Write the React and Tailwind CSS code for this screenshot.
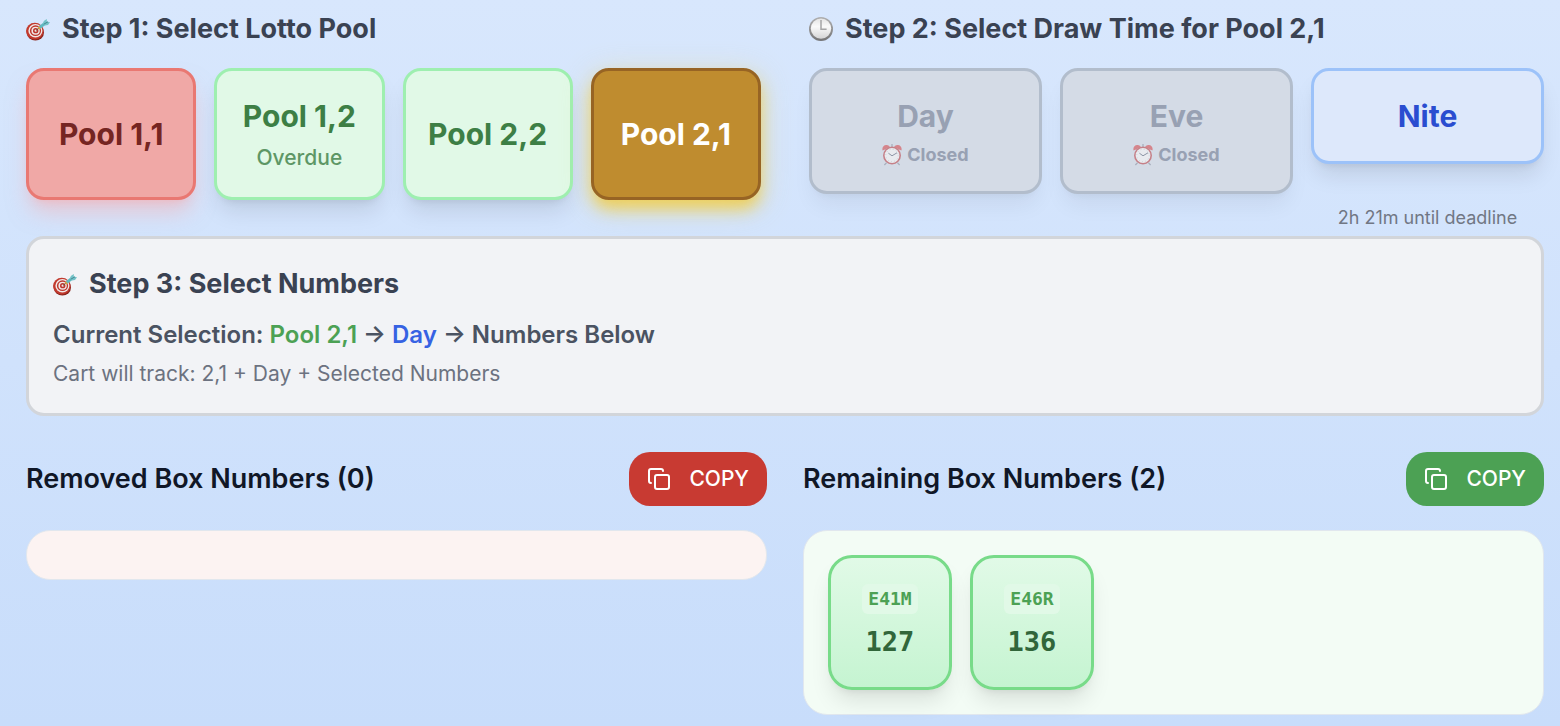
import React from 'react';
import { Copy } from 'lucide-react';

const POOLS = [
  {
    name: 'Pool 1,1',
    style: 'bg-[#f0a8a6] border-[#e97872] text-[#752522] shadow-[0_15px_22px_-4px_rgba(252,165,165,0.5),0_6px_9px_-6px_rgba(252,165,165,0.5)]',
  },
  {
    name: 'Pool 1,2',
    note: 'Overdue',
    style: 'bg-[#e1f9e7] border-[#9eefb0] text-[#3d7f45] shadow-[0_15px_22px_-4px_rgba(0,0,0,0.1),0_6px_9px_-6px_rgba(0,0,0,0.1)]',
  },
  {
    name: 'Pool 2,2',
    style: 'bg-[#e1f9e7] border-[#9eefb0] text-[#3d7f45] shadow-[0_15px_22px_-4px_rgba(0,0,0,0.1),0_6px_9px_-6px_rgba(0,0,0,0.1)]',
  },
  {
    name: 'Pool 2,1',
    style: 'bg-[#bf8c2f] border-[#976424] text-white shadow-[0_6px_30px_rgba(235,215,110,0.45),0_10px_16px_-2px_rgba(245,200,50,0.85)]',
  },
];

const DRAWS = [
  { name: 'Day', closed: true },
  { name: 'Eve', closed: true },
  { name: 'Nite', deadline: '2h 21m until deadline' },
];

const REMAINING = [
  { code: 'E41M', number: '127' },
  { code: 'E46R', number: '136' },
];

function TargetIcon() {
  return (
    <svg className="size-6 shrink-0" viewBox="0 0 24 24" aria-hidden="true">
      <ellipse cx="9.4" cy="15.4" rx="8.6" ry="8.2" fill="#8a241d" />
      <ellipse cx="8.8" cy="14.1" rx="8.8" ry="8.4" fill="#c23a2e" />
      <ellipse cx="9.4" cy="13.7" rx="7" ry="6.8" fill="#f1e9e8" />
      <ellipse cx="9.5" cy="13.7" rx="5.6" ry="5.4" fill="#bd362c" />
      <ellipse cx="9.6" cy="13.7" rx="4.2" ry="4" fill="#f1e9e8" />
      <ellipse cx="9.7" cy="13.7" rx="2.7" ry="2.6" fill="#bd362c" />
      <ellipse cx="9.7" cy="13.7" rx="1.2" ry="1.1" fill="#f1e9e8" />
      <path d="M10 13.4 13.6 10.6" stroke="#6b4a35" strokeWidth="1" />
      <path d="M12.4 11.6 15 9.6" stroke="#d9a93c" strokeWidth="2.2" />
      <path d="M13.8 10.4 19.4 6" stroke="#5fb9c0" strokeWidth="3" />
      <path d="M17 6.8 17.8 4 20.8 2 20.8 4.6 24 5.2 22 8 18.8 8.4Z" fill="#74c3c8" />
      <path d="M17.8 7.2 22 4.8" stroke="#3f7f8c" strokeWidth="0.9" />
    </svg>
  );
}

function ClockIcon() {
  return (
    <svg className="size-6 shrink-0" viewBox="0 0 24 24" aria-hidden="true">
      <defs>
        <linearGradient id="rim" x1="0" y1="0" x2="0" y2="1">
          <stop offset="0" stopColor="#b0b0b1" />
          <stop offset="1" stopColor="#747476" />
        </linearGradient>
        <linearGradient id="face" x1="0" y1="0" x2="0" y2="1">
          <stop offset="0" stopColor="#e4e4e4" />
          <stop offset="0.4" stopColor="#fafafa" />
          <stop offset="1" stopColor="#d4d4d5" />
        </linearGradient>
      </defs>
      <circle cx="12" cy="12" r="12" fill="url(#rim)" />
      <circle cx="12" cy="11.6" r="10.2" fill="url(#face)" />
      <path d="M12 3V12.2H17.6" fill="none" stroke="#a5a5a6" strokeWidth="1.5" />
    </svg>
  );
}

function AlarmIcon() {
  return (
    <svg className="h-[22px] w-5 shrink-0" viewBox="0 0 20 22" aria-hidden="true">
      <path d="M10 0V4M4.6 18.6 2.4 21M15.4 18.6 17.6 21" stroke="#a9b0be" strokeWidth="1.3" />
      <path d="M.6 6.6C-.4 3.4 2 .6 4.6 1 6.4 1.2 7.6 2 8 3.2Z" fill="#d5858c" />
      <path d="M19.4 6.6C20.4 3.4 18 .6 15.4 1 13.6 1.2 12.4 2 12 3.2Z" fill="#d5858c" />
      <circle cx="10" cy="11.5" r="9" fill="#c58088" />
      <circle cx="10" cy="11.5" r="7.4" fill="#e9ebef" />
      <circle cx="10" cy="11.5" r="6.2" fill="none" stroke="#bec3cd" strokeWidth="0.9" strokeDasharray="0.7 2.55" />
      <path d="M6.4 9.2 10 11.8 15 8.8" fill="none" stroke="#8d96a6" strokeWidth="1" />
    </svg>
  );
}

function StepHeading({ icon, children }) {
  return (
    <h2 className="flex items-center gap-3 text-[27px] leading-[42px] font-bold text-[#3a4252]">
      {icon}
      {children}
    </h2>
  );
}

function DrawCard({ name, closed, deadline }) {
  const style = closed
    ? 'bg-[#d4dbe6] border-[#b2bdcc] text-[#98a1b3] shadow-[0_15px_22px_-4px_rgba(0,0,0,0.06),0_6px_9px_-6px_rgba(0,0,0,0.06)]'
    : 'bg-[#dde8fb] border-[#9cc2f9] text-[#2a4dd0] shadow-[0_15px_22px_-4px_rgba(0,0,0,0.1),0_6px_9px_-6px_rgba(0,0,0,0.1)]';
  return (
    <div className="text-center">
      <button
        type="button"
        disabled={closed}
        className={`block w-full rounded-[18px] border-3 p-6 ${style}`}
      >
        <span className="block text-[30px] leading-[42px] font-bold">{name}</span>
        {closed && (
          <span className="mt-1.5 flex items-center justify-center gap-[5px] text-lg leading-6 font-bold">
            <AlarmIcon />
            Closed
          </span>
        )}
      </button>
      {deadline && <p className="mt-[42px] text-lg leading-6 text-[#717784]">{deadline}</p>}
    </div>
  );
}

function BoxPanel({ title, buttonStyle, panelStyle, children }) {
  return (
    <section>
      <div className="flex items-center justify-between">
        <h2 className="text-[27px] leading-[42px] font-semibold text-[#101727]">{title}</h2>
        <button
          type="button"
          className={`flex h-[54px] items-center gap-[18px] rounded-[21px] px-[18px] text-[21px] leading-[30px] font-medium text-white ${buttonStyle}`}
        >
          <Copy className="size-6" strokeWidth={2} aria-hidden="true" />
          COPY
        </button>
      </div>
      <div className={`mt-6 flex flex-wrap gap-[18px] rounded-3xl border border-[#e1e7ee] p-6 ${panelStyle}`}>
        {children}
      </div>
    </section>
  );
}

export default function App() {
  return (
    <main className="min-h-screen bg-linear-to-b from-[#d8e7fd] to-[#c8ddfb] pt-2 pr-4 pb-3 pl-[26px] font-['Inter',sans-serif]">
      <div className="grid grid-cols-2 gap-12 pb-1.5">
        <section>
          <StepHeading icon={<TargetIcon />}>Step 1: Select Lotto Pool</StepHeading>
          <div className="mt-[18px] grid grid-cols-4 gap-[18px]">
            {POOLS.map(pool => (
              <button
                key={pool.name}
                type="button"
                className={`h-[132px] rounded-[18px] border-3 text-center ${pool.style}`}
              >
                <span className="block text-[30px] leading-[42px] font-bold">{pool.name}</span>
                {pool.note && (
                  <span className="mt-1.5 block text-[21px] leading-[30px] font-medium opacity-80">{pool.note}</span>
                )}
              </button>
            ))}
          </div>
        </section>

        <section>
          <StepHeading icon={<ClockIcon />}>Step 2: Select Draw Time for Pool 2,1</StepHeading>
          <div className="mt-[18px] grid grid-cols-3 gap-[18px]">
            {DRAWS.map(draw => <DrawCard key={draw.name} {...draw} />)}
          </div>
        </section>
      </div>

      <section className="relative rounded-[18px] border-3 border-[#d2d5da] bg-[#f2f3f6] p-6">
        <StepHeading icon={<TargetIcon />}>Step 3: Select Numbers</StepHeading>
        <p className="mt-3 text-2xl leading-9 font-semibold text-[#4b5362]">
          Current Selection: <span className="text-[#4ca154]">Pool 2,1</span> →{' '}
          <span className="text-[#3662e3]">Day</span> → Numbers Below
        </p>
        <p className="mt-1.5 text-[21px] leading-[30px] text-[#6c7280]">
          Cart will track: 2,1 + Day + Selected Numbers
        </p>
      </section>

      <div className="mt-9 grid grid-cols-2 items-start gap-9">
        <BoxPanel title="Removed Box Numbers (0)" buttonStyle="bg-[#c83a32]" panelStyle="bg-[#fcf3f2]" />
        <BoxPanel title="Remaining Box Numbers (2)" buttonStyle="bg-[#4ca154]" panelStyle="bg-[#f3fcf5]">
          {REMAINING.map(({ code, number }) => (
            <div
              key={code}
              className="flex h-[135px] w-[124px] flex-col items-center justify-center gap-2 rounded-3xl border-3 border-[#78db89] bg-linear-to-b from-[#e1fae7] to-[#c5f4d1] font-['DejaVu_Sans_Mono',monospace] font-bold shadow-[0_15px_22px_-4px_rgba(0,0,0,0.1),0_6px_9px_-6px_rgba(0,0,0,0.1)]"
            >
              <span className="rounded-md bg-[#e1f9e7] px-1.5 py-[3px] text-lg leading-6 text-[#4ca154]">{code}</span>
              <span className="text-[27px] leading-10 text-[#31663a]">{number}</span>
            </div>
          ))}
        </BoxPanel>
      </div>
    </main>
  );
}
